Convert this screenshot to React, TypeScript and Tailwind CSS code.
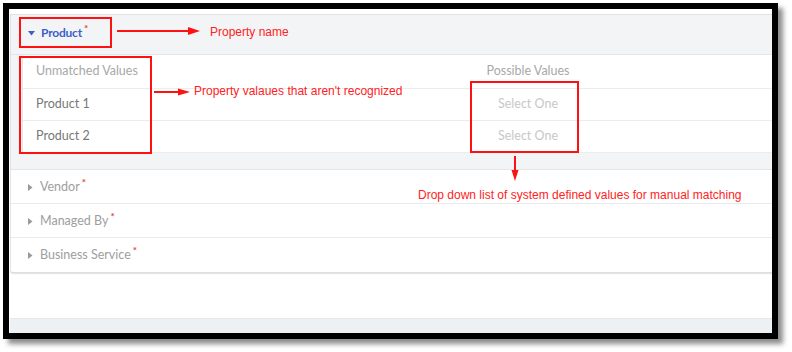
import React from 'react';

const ui = { fontFamily: 'Lato, "Open Sans", sans-serif' };
const note = { fontFamily: '"Liberation Sans", Arial, sans-serif' };

const UNMATCHED = ['Product 1', 'Product 2'];
const OTHERS = ['Vendor', 'Managed By', 'Business Service'];

const Caret: React.FC<{ open?: boolean }> = ({ open }) =>
  open ? (
    <svg width="7" height="5" viewBox="0 0 7 5" className="shrink-0">
      <path d="M0 0 H7 L3.5 4.5 Z" fill="#3d5fc9" />
    </svg>
  ) : (
    <svg width="5" height="7" viewBox="0 0 5 7" className="shrink-0">
      <path d="M0 0 V7 L4.5 3.5 Z" fill="#9a9a9a" />
    </svg>
  );

const Required = () => <span className="text-[#e0474c] text-[10px] font-bold leading-none relative -top-[5px] ml-[2px]">*</span>;

export default function App() {
  return (
    <div className="relative w-[792px] h-[352px] bg-white overflow-hidden" style={ui}>
      <div className="pl-[3px] pt-[3px]">
        <div className="w-[775px] h-[336px] border-[6px] border-black bg-white shadow-[5px_5px_5px_rgba(0,0,0,0.45)] flex flex-col pt-[5px] pl-[1px]">
          {/* expanded property */}
          <div className="border-t border-[#dfe1e4] border-l bg-[#f3f4f6]">
            <div className="h-[40px] flex items-center pl-[17px] pb-[3px] gap-[6px] border-b border-[#e3e5e8]">
              <Caret open />
              <span className="text-[12px] font-bold text-[#3d5fc9] tracking-[-0.2px]">
                Product
                <Required />
              </span>
            </div>
            <div className="bg-white ml-[11px] border-l border-[#e3e5e8]">
              <div className="h-[34px] grid grid-cols-[400px_210px] items-center border-b border-[#ebedef] text-[12.5px] text-[#a8a8a8]">
                <span className="pl-[13px]">Unmatched Values</span>
                <span className="text-center">Possible Values</span>
              </div>
              {UNMATCHED.map((v) => (
                <div key={v} className="h-[32px] grid grid-cols-[400px_210px] items-center border-b border-[#ebedef] text-[12.5px]">
                  <span className="pl-[13px] text-[#777]">{v}</span>
                  <span className="text-center text-[#c8c8c8]">Select One</span>
                </div>
              ))}
            </div>
            <div className="h-[17px] border-b border-[#e3e5e8]" />
          </div>
          {/* collapsed properties */}
          <div className="bg-white border-l border-[#e3e5e8] rounded-bl-[3px] shadow-[0_1px_1px_rgba(0,0,0,0.12)] border-b border-b-[#dcdee0]">
            {OTHERS.map((name, i) => (
              <div
                key={name}
                className={`h-[34px] flex items-center pl-[17px] pt-[1px] gap-[7px] ${i < OTHERS.length - 1 ? 'border-b border-[#e8eaec]' : ''}`}
              >
                <Caret />
                <span className="text-[12.5px] text-[#9e9e9e]">
                  {name}
                  <Required />
                </span>
              </div>
            ))}
          </div>
          <div className="flex-1" />
          <div className="h-[15px] bg-[#eef1f4] border-t border-[#e6e9ec]" />
        </div>
      </div>

      {/* annotations */}
      <svg className="absolute top-0 left-0 pointer-events-none" width="792" height="352">
        <g fill="none" stroke="#ff1111" strokeWidth="2">
          <rect x="20" y="18" width="91" height="29" />
          <rect x="20" y="57" width="131" height="96" />
          <rect x="471" y="82" width="107" height="70" />
          <line x1="117" y1="31" x2="190" y2="31" />
          <line x1="154" y1="92" x2="180" y2="92" />
          <line x1="515" y1="156" x2="515" y2="172" />
        </g>
        <g fill="#ff1111">
          <path d="M188 27 L200 31 L188 35 Z" />
          <path d="M178 88.5 L190 92 L178 95.5 Z" />
          <path d="M511.5 170 L515 181 L518.5 170 Z" />
        </g>
      </svg>
      <div className="absolute left-[210px] top-[26px] text-[12px] text-[#ff2222] leading-none" style={note}>
        Property name
      </div>
      <div className="absolute left-[194px] top-[85px] text-[12px] text-[#ff2222] leading-none" style={note}>
        Property valaues that aren't recognized
      </div>
      <div className="absolute left-[418px] top-[189px] text-[12px] text-[#ff2222] leading-none" style={note}>
        Drop down list of system defined values for manual matching
      </div>
    </div>
  );
}
